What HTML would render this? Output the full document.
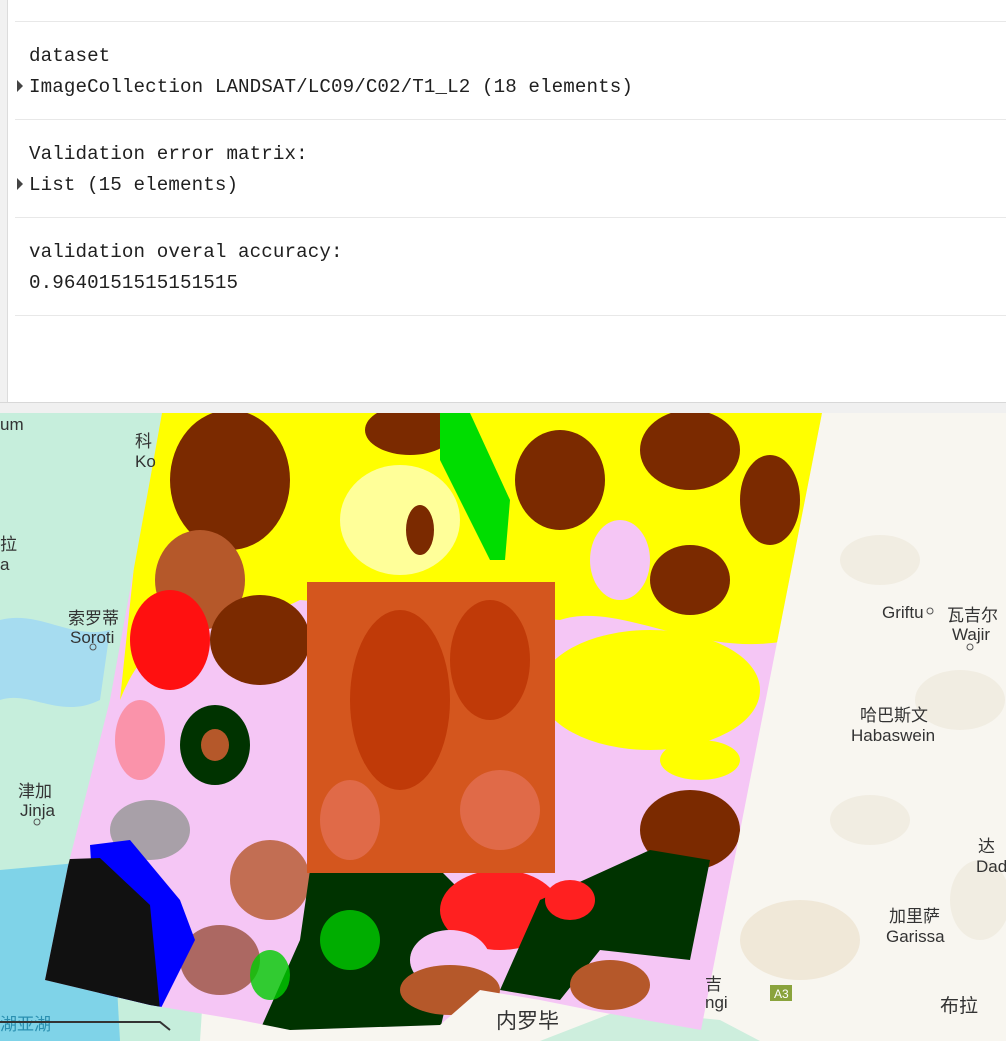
<!DOCTYPE html>
<html><head><meta charset="utf-8"><style>
html,body{margin:0;padding:0;width:1006px;height:1041px;overflow:hidden;background:#fff;font-family:"Liberation Mono",monospace}
.strip{position:absolute;left:0;top:0;width:7px;height:402px;background:#f1f1f1;border-right:1px solid #dcdcdc}
.row{position:absolute;left:15px;right:0;border-top:1px solid #e8e8e8}
.t{position:absolute;left:29px;font-size:19.2px;letter-spacing:0.1px;color:#202020;white-space:pre;line-height:22px}
.tri{position:absolute;left:17px;width:0;height:0;border-left:6px solid #444;border-top:6px solid transparent;border-bottom:6px solid transparent}
.bar{position:absolute;left:0;top:402px;width:1006px;height:11px;background:#f0f0f0;border-top:1px solid #d8d8d8}
svg{position:absolute;left:0;top:413px}
</style></head><body>
<div class="strip"></div>
<div class="row" style="top:21px"></div>
<div class="t" style="top:45px">dataset</div>
<div class="tri" style="top:80px"></div>
<div class="t" style="top:76px">ImageCollection LANDSAT/LC09/C02/T1_L2 (18 elements)</div>
<div class="row" style="top:119px"></div>
<div class="t" style="top:143px">Validation error matrix:</div>
<div class="tri" style="top:178px"></div>
<div class="t" style="top:174px">List (15 elements)</div>
<div class="row" style="top:217px"></div>
<div class="t" style="top:241px">validation overal accuracy:</div>
<div class="t" style="top:272px">0.9640151515151515</div>
<div class="row" style="top:315px"></div>
<div class="bar"></div>
<svg width="1006" height="628" viewBox="0 413 1006 628" font-family="Liberation Sans, Noto Sans CJK SC, sans-serif">
<defs><clipPath id="sc"><polygon points="162,413 822,413 701,1030 600,1012 540,1000 480,990 440,1025 290,1030 240,1020 150,1005 45,980 68,866 110,700 150,480"/></clipPath></defs>
<rect x="0" y="413" width="1006" height="628" fill="#f8f6f0"/>
<polygon points="0,413 240,413 200,1041 0,1041" fill="#c6eedc"/>
<ellipse cx="880" cy="560" rx="40" ry="25" fill="#f1ede2"/>
<ellipse cx="960" cy="700" rx="45" ry="30" fill="#f1ede2"/>
<ellipse cx="870" cy="820" rx="40" ry="25" fill="#f1ede2"/>
<ellipse cx="800" cy="940" rx="60" ry="40" fill="#f0e8d8"/>
<ellipse cx="980" cy="900" rx="30" ry="40" fill="#f1ede2"/>
<path d="M0,620 C40,610 70,640 110,630 L100,700 C60,720 30,690 0,700Z" fill="#a6dcf0"/>
<path d="M0,870 L110,860 L120,1041 L0,1041Z" fill="#7fd3e8"/>
<path d="M540,1041 L620,1010 L720,1020 L760,1041Z" fill="#cdeedd"/>
<g clip-path="url(#sc)">
<rect x="0" y="413" width="1006" height="628" fill="#f5c6f5"/>
<path d="M150,413 L822,413 L790,640 C700,660 620,600 560,620 L300,600 C220,640 160,600 120,700 Z" fill="#ffff00"/>
<ellipse cx="230" cy="480" rx="60" ry="70" fill="#7b2a00"/>
<ellipse cx="200" cy="580" rx="45" ry="50" fill="#b5582a"/>
<ellipse cx="260" cy="640" rx="50" ry="45" fill="#7b2a00"/>
<ellipse cx="170" cy="640" rx="40" ry="50" fill="#ff1010"/>
<ellipse cx="410" cy="430" rx="45" ry="25" fill="#7b2a00"/>
<ellipse cx="400" cy="520" rx="60" ry="55" fill="#ffff99"/>
<ellipse cx="420" cy="530" rx="14" ry="25" fill="#7b2a00"/>
<path d="M440,413 L470,413 L510,500 L505,560 L490,560 L440,460Z" fill="#00dd00"/>
<ellipse cx="560" cy="480" rx="45" ry="50" fill="#7b2a00"/>
<ellipse cx="690" cy="450" rx="50" ry="40" fill="#7b2a00"/>
<ellipse cx="690" cy="580" rx="40" ry="35" fill="#7b2a00"/>
<ellipse cx="770" cy="500" rx="30" ry="45" fill="#7b2a00"/>
<ellipse cx="620" cy="560" rx="30" ry="40" fill="#f5c6f5"/>
<ellipse cx="650" cy="690" rx="110" ry="60" fill="#ffff00"/>
<ellipse cx="700" cy="760" rx="40" ry="20" fill="#ffff00"/>
<ellipse cx="690" cy="830" rx="50" ry="40" fill="#7b2a00"/>
<ellipse cx="215" cy="745" rx="35" ry="40" fill="#003300"/>
<ellipse cx="215" cy="745" rx="14" ry="16" fill="#b5582a"/>
<ellipse cx="140" cy="740" rx="25" ry="40" fill="#ff6060" opacity=".5"/>
<ellipse cx="150" cy="830" rx="40" ry="30" fill="#1a5a1a" opacity=".35"/>
<ellipse cx="270" cy="880" rx="40" ry="40" fill="#b5582a" opacity=".8"/>
<ellipse cx="220" cy="960" rx="40" ry="35" fill="#7b2a00" opacity=".6"/>
<path d="M310,870 L420,850 L470,900 L440,1030 L260,1030 L300,940Z" fill="#003300"/>
<ellipse cx="350" cy="940" rx="30" ry="30" fill="#00cc00" opacity=".8"/>
<ellipse cx="500" cy="910" rx="60" ry="40" fill="#ff2020"/>
<ellipse cx="450" cy="960" rx="40" ry="30" fill="#f5c6f5"/>
<ellipse cx="450" cy="990" rx="50" ry="25" fill="#b5582a"/>
<path d="M540,900 L650,850 L710,860 L690,960 L600,950 L560,1000 L500,990Z" fill="#003300"/>
<ellipse cx="610" cy="985" rx="40" ry="25" fill="#b5582a"/>
<ellipse cx="570" cy="900" rx="25" ry="20" fill="#ff2020"/>
<path d="M90,845 L130,840 L180,900 L195,940 L160,1010 L100,1010Z" fill="#0000ff"/>
<path d="M40,860 L100,858 L150,905 L160,1010 L40,1010Z" fill="#111"/>
<ellipse cx="270" cy="975" rx="20" ry="25" fill="#00cc00" opacity=".8"/>
<rect x="307" y="582" width="248" height="291" fill="#d4561e"/>
<ellipse cx="400" cy="700" rx="50" ry="90" fill="#c03a08"/>
<ellipse cx="490" cy="660" rx="40" ry="60" fill="#c03a08"/>
<ellipse cx="350" cy="820" rx="30" ry="40" fill="#e06a48"/>
<ellipse cx="500" cy="810" rx="40" ry="40" fill="#e06a48"/>
</g>
<g fill="#333" font-size="17">
<text x="0" y="430">um</text>
<text x="135" y="447">科</text><text x="135" y="467">Ko</text>
<text x="0" y="550">拉</text><text x="0" y="570">a</text>
<text x="68" y="624">索罗蒂</text><text x="70" y="643">Soroti</text>
<text x="18" y="797">津加</text><text x="20" y="816">Jinja</text>
<text x="882" y="618">Griftu</text><text x="947" y="621">瓦吉尔</text><text x="952" y="640">Wajir</text>
<text x="860" y="721">哈巴斯文</text><text x="851" y="741">Habaswein</text>
<text x="978" y="852">达</text><text x="976" y="872">Dad</text>
<text x="889" y="922">加里萨</text><text x="886" y="942">Garissa</text>
<text x="705" y="990">吉</text><text x="705" y="1008">ngi</text>
<text x="940" y="1012" font-size="19">布拉</text>
<text x="496" y="1028" font-size="21">内罗毕</text>
<text x="0" y="1030" fill="#2a8fb0">湖亚湖</text>
</g>
<rect x="770" y="985" width="22" height="16" fill="#8aa33c"/><text x="774" y="998" font-size="12" fill="#fff" font-family="Liberation Sans">A3</text>
<circle cx="930" cy="611" r="3" fill="none" stroke="#555"/>
<circle cx="970" cy="647" r="3" fill="none" stroke="#555"/>
<circle cx="37" cy="822" r="3" fill="none" stroke="#555"/>
<circle cx="93" cy="647" r="3" fill="none" stroke="#555"/>
<path d="M0,1022 L160,1022 L170,1030" stroke="#333" stroke-width="2" fill="none"/>
</svg>
</body></html>
